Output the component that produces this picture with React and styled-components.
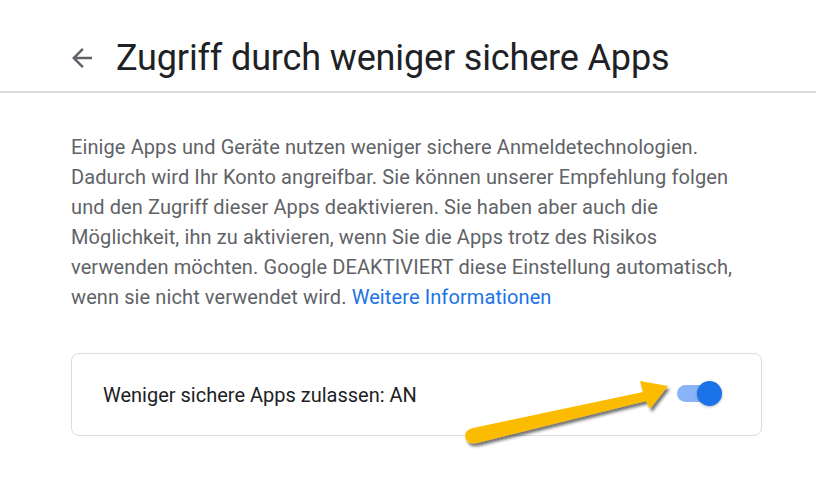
import React from 'react';
import styled, { createGlobalStyle } from 'styled-components';

const GlobalStyle = createGlobalStyle`
  html, body { margin: 0; padding: 0; background: #fff; }
  body { font-family: Roboto, "Liberation Sans", Arial, sans-serif; }
`;

const Page = styled.div`
  width: 816px;
  height: 478px;
  position: relative;
  overflow: hidden;
  background: #fff;
`;

const Header = styled.header`
  height: 93px;
  border-bottom: 2px solid #dadce0;
  box-sizing: border-box;
  display: flex;
  align-items: center;
  padding: 25px 0 0 67px;
  gap: 19px;
`;

const BackButton = styled.button`
  border: 0;
  background: none;
  padding: 0;
  width: 30px;
  height: 30px;
  display: flex;
  align-items: center;
  justify-content: center;
  color: #5f6368;
  cursor: pointer;
`;

const Title = styled.h1`
  margin: 0;
  font-family: Roboto, "Open Sans", sans-serif;
  font-weight: 400;
  font-size: 36px;
  color: #202124;
  letter-spacing: -0.15px;
`;

const Content = styled.main`
  padding: 39px 71px 0 71px;
`;

const Description = styled.p`
  margin: 0;
  font-size: 20px;
  line-height: 30px;
  letter-spacing: 0.1px;
  color: #5f6368;
  width: 676px;
`;

const Link = styled.a`
  color: #1a73e8;
  text-decoration: none;
`;

const Card = styled.section`
  margin-top: 41px;
  width: 691px;
  height: 83px;
  box-sizing: border-box;
  border: 1px solid #dadce0;
  border-radius: 8px;
  display: flex;
  align-items: center;
  justify-content: space-between;
  padding: 0 49px 0 31px;
`;

const Label = styled.span`
  font-size: 20px;
  color: #202124;
`;

const Switch = styled.div`
  position: relative;
  width: 35px;
  height: 17px;
  margin-bottom: 3px;
  border-radius: 9px;
  background: ${p => (p.$on ? '#8ab4f8' : '#bdc1c6')};
  &::after {
    content: '';
    position: absolute;
    top: -4px;
    left: ${p => (p.$on ? '20px' : '-4px')};
    width: 25px;
    height: 25px;
    border-radius: 50%;
    background: ${p => (p.$on ? '#1a73e8' : '#fff')};
    box-shadow: 0 1px 3px rgba(0, 0, 0, 0.3);
  }
`;

const Pointer = styled.svg`
  position: absolute;
  left: 455px;
  top: 370px;
  overflow: visible;
`;

export default function App() {
  return (
    <Page>
      <GlobalStyle />
      <Header>
        <BackButton aria-label="Zurück">
          <svg width="30" height="30" viewBox="0 0 24 24">
            <path d="M20 11H7.83l5.59-5.59L12 4l-8 8 8 8 1.41-1.41L7.83 13H20v-2z" fill="currentColor" />
          </svg>
        </BackButton>
        <Title>Zugriff durch weniger sichere Apps</Title>
      </Header>
      <Content>
        <Description>
          Einige Apps und Geräte nutzen weniger sichere Anmeldetechnologien. Dadurch wird Ihr Konto angreifbar. Sie können unserer Empfehlung folgen und den Zugriff dieser Apps deaktivieren. Sie haben aber auch die Möglichkeit, ihn zu aktivieren, wenn Sie die Apps trotz des Risikos verwenden möchten. Google DEAKTIVIERT diese Einstellung automatisch, wenn sie nicht verwendet wird. <Link href="#">Weitere Informationen</Link>
        </Description>
        <Card>
          <Label>Weniger sichere Apps zulassen: AN</Label>
          <Switch $on role="switch" aria-checked="true" />
        </Card>
      </Content>
      <Pointer width="230" height="80" viewBox="0 0 230 80">
        <defs>
          <filter id="sh" x="-10%" y="-30%" width="130%" height="170%">
            <feDropShadow dx="2" dy="3" stdDeviation="1.6" floodColor="#000" floodOpacity="0.55" />
          </filter>
        </defs>
        <g filter="url(#sh)" fill="#fbbc04">
          <path d="M18 58 L188 22 L185 11 L213 16 L195 39 L191 31 L22 73 Q11 75 10 66 Q10 60 18 58 Z" />
        </g>
      </Pointer>
    </Page>
  );
}
